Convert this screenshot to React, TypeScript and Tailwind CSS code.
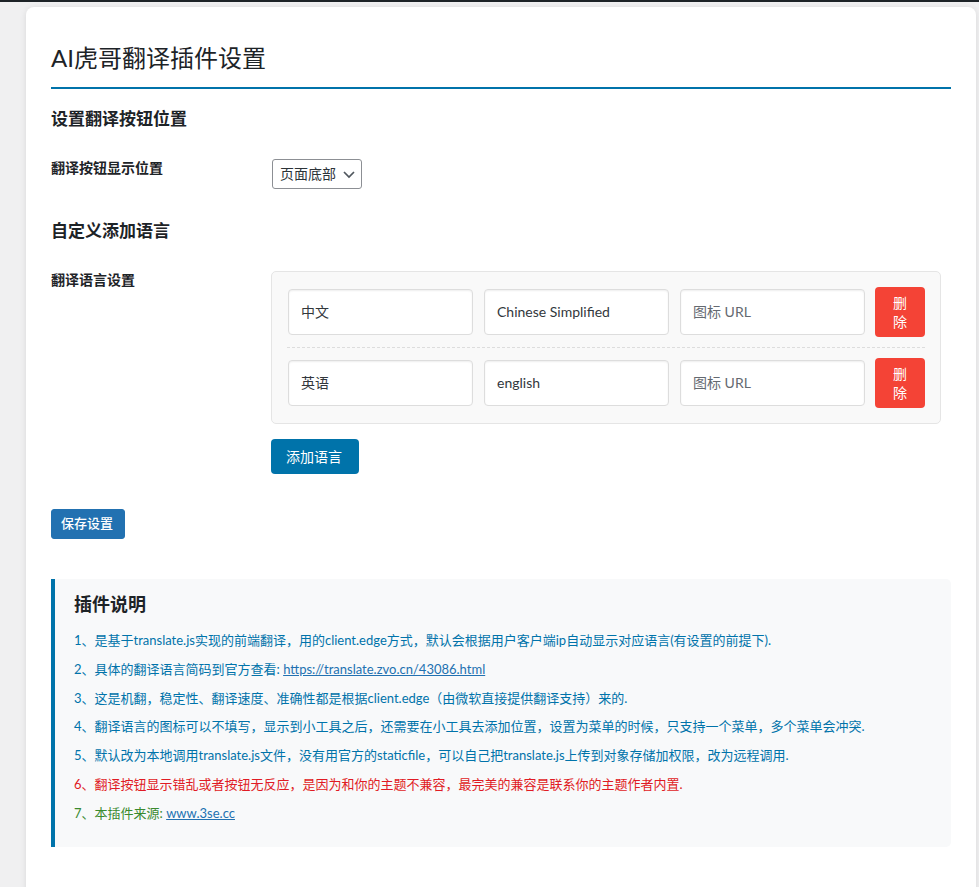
import React from "react";

const languages = [
  { name: "中文", code: "Chinese Simplified" },
  { name: "英语", code: "english" },
];

const inputClass =
  "h-[46px] w-[185px] rounded-[4px] border border-[#dddddd] bg-white px-3 pb-[2px] text-sm text-[#32373c] shadow-[inset_0_1px_2px_rgba(0,0,0,0.07)] outline-none placeholder:text-[#646970]";

function LanguageRow({ name, code, last }: { name: string; code: string; last?: boolean }) {
  return (
    <div
      className={
        last
          ? "flex items-center"
          : "mb-[10px] flex items-center border-b border-dashed border-[#dddddd] pb-[10px]"
      }
    >
      <div className="flex items-center gap-[11px] pl-px">
        <input className={inputClass} defaultValue={name} placeholder="语言名称" />
        <input className={inputClass} defaultValue={code} placeholder="语言代码" />
        <input className={inputClass} placeholder="图标 URL" />
      </div>
      <button className="ml-[10px] h-[50px] w-[50px] rounded-[4px] bg-[#f44336] px-[15px] text-sm leading-[19px] text-white">
        删除
      </button>
    </div>
  );
}

export default function App() {
  return (
    <div
      className="h-[887px] overflow-hidden border-t-2 border-[#1d2327] bg-[#f0f0f1] pt-[5px] pl-[26px] pr-[3px] text-[#1d2327]"
      style={{ fontFamily: 'Lato, "Noto Sans CJK SC", sans-serif' }}
    >
      <div className="h-[900px] rounded-lg bg-white px-[25px] pt-[25px] shadow-[0_1px_6px_rgba(0,0,0,0.1)]">
        <h1 className="border-b-2 border-[#0073aa] pt-[9px] pb-[12px] text-2xl leading-[34px] font-normal">
          AI虎哥翻译插件设置
        </h1>

        <h2 className="mt-[18px] text-[17px] leading-6 font-bold">设置翻译按钮位置</h2>

        <div className="mt-[28px] flex">
          <div className="w-[221px] text-sm leading-[18px] font-bold">翻译按钮显示位置</div>
          <div className="relative h-[30px] w-[90px]">
            <select className="h-[30px] w-[90px] appearance-none rounded-[3px] border border-[#8c8f94] bg-white pl-[7px] text-sm text-[#2c3338] outline-none">
              <option>页面底部</option>
            </select>
            <svg
              className="pointer-events-none absolute top-[12px] right-[7px]"
              width="12"
              height="8"
              viewBox="0 0 12 8"
              fill="none"
              stroke="#50575e"
              strokeWidth="1.7"
            >
              <path d="M1 1 L6 6 L11 1" />
            </svg>
          </div>
        </div>

        <h2 className="mt-[30px] pb-px text-[17px] leading-6 font-bold">自定义添加语言</h2>

        <div className="mt-[27px] flex">
          <div className="w-[220px] text-sm leading-[18px] font-bold">翻译语言设置</div>
          <div>
            <div className="w-[670px] rounded-[5px] border border-[#e5e5e5] bg-[#f9f9f9] p-[15px]">
              {languages.map((l, i) => (
                <LanguageRow key={l.code} name={l.name} code={l.code} last={i === languages.length - 1} />
              ))}
            </div>
            <button className="mt-[15px] h-[35px] w-[88px] rounded-[4px] bg-[#0073aa] pr-[2px] text-sm text-white">
              添加语言
            </button>
          </div>
        </div>

        <button className="mt-[35px] block h-[30px] w-[74px] rounded-[3px] border border-[#2271b1] bg-[#2271b1] pr-[2px] text-[13px] font-medium text-white">
          保存设置
        </button>

        <div className="mt-10 h-[268px] rounded-r-[5px] border-l-4 border-[#0073aa] bg-[#f8f9fa] pt-[15px] pl-[19px] text-[13px] leading-[20.8px]">
          <h3 className="mb-[16px] text-lg leading-5 font-bold text-[#1d2327]">插件说明</h3>
          <div className="flex flex-col gap-2 text-[#0073aa]">
            <p>1、是基于translate.js实现的前端翻译，用的client.edge方式，默认会根据用户客户端ip自动显示对应语言(有设置的前提下).</p>
            <p>
              2、具体的翻译语言简码到官方查看:{" "}
              <a className="text-[#2271b1] underline" href="#">
                https://translate.zvo.cn/43086.html
              </a>
            </p>
            <p>3、这是机翻，稳定性、翻译速度、准确性都是根据client.edge（由微软直接提供翻译支持）来的.</p>
            <p>4、翻译语言的图标可以不填写，显示到小工具之后，还需要在小工具去添加位置，设置为菜单的时候，只支持一个菜单，多个菜单会冲突.</p>
            <p>5、默认改为本地调用translate.js文件，没有用官方的staticfile，可以自己把translate.js上传到对象存储加权限，改为远程调用.</p>
            <p className="text-[#e01b24]">6、翻译按钮显示错乱或者按钮无反应，是因为和你的主题不兼容，最完美的兼容是联系你的主题作者内置.</p>
            <p className="text-[#3a8a2e]">
              7、本插件来源:{" "}
              <a className="text-[#2271b1] underline" href="#">
                www.3se.cc
              </a>
            </p>
          </div>
        </div>
      </div>
    </div>
  );
}
